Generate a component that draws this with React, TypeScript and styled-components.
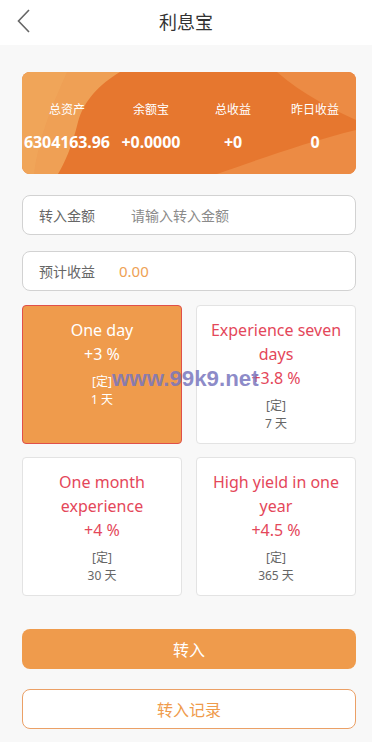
import React from "react";
import styled, { createGlobalStyle } from "styled-components";

const Global = createGlobalStyle`
  html, body { margin: 0; padding: 0; background: #f8f8f8; }
  body { font-family: "Noto Sans", "Noto Sans CJK SC", sans-serif; }
  * { box-sizing: border-box; }
`;

const Page = styled.div`
  position: relative;
  width: 372px;
  min-height: 742px;
  background: #f8f8f8;
`;

const Header = styled.header`
  position: relative;
  height: 45px;
  background: #fff;
  display: flex;
  align-items: center;
  justify-content: center;
`;

const Back = styled.button`
  position: absolute;
  left: 12px;
  top: 6px;
  width: 24px;
  height: 30px;
  border: 0;
  background: none;
  padding: 0;
  display: flex;
  align-items: center;
  justify-content: center;
`;

const Title = styled.h1`
  margin: 0;
  font-family: "Noto Sans CJK SC", sans-serif;
  font-weight: 400;
  font-size: 18px;
  color: #333;
  line-height: 1;
  margin-top: -4px;
`;

const Body = styled.main`
  padding: 27px 16px 0 22px;
  display: flex;
  flex-direction: column;
`;

const Banner = styled.section`
  position: relative;
  height: 102px;
  border-radius: 8px;
  overflow: hidden;
  background: #e6772f;
  display: grid;
  grid-template-columns: repeat(4, 1fr);
  align-content: start;
  padding-top: 29px;
  padding-left: 2px;
  row-gap: 15px;
  color: #fff;
`;

const BannerBg = styled.svg`
  position: absolute;
  inset: 0;
  width: 100%;
  height: 100%;
`;

const StatLabel = styled.div`
  position: relative;
  text-align: center;
  font-family: "Noto Sans CJK SC", sans-serif;
  font-size: 12px;
  line-height: 16px;
`;

const StatValue = styled.div`
  position: relative;
  text-align: center;
  font-weight: 700;
  font-size: 16px;
  line-height: 20px;
  white-space: nowrap;
  letter-spacing: -0.1px;
`;

const Field = styled.div<{ $top: number }>`
  margin-top: ${(p) => p.$top}px;
  height: 40px;
  border: 1px solid #d2d2d2;
  border-radius: 8px;
  background: #fff;
  display: flex;
  align-items: center;
  padding-left: 16px;
`;

const FieldLabel = styled.span<{ $w: number }>`
  width: ${(p) => p.$w}px;
  font-family: "Noto Sans CJK SC", sans-serif;
  font-size: 14px;
  color: #666;
`;

const FieldInput = styled.input`
  flex: 1;
  border: 0;
  outline: none;
  background: transparent;
  padding: 0;
  font-family: "Noto Sans CJK SC", sans-serif;
  font-size: 14px;
  color: #333;
  &::placeholder { color: #8a8a8a; }
`;

const Earn = styled.span`
  font-size: 15px;
  color: #eea154;
`;

const Grid = styled.div`
  margin-top: 14px;
  display: grid;
  grid-template-columns: 160px 160px;
  column-gap: 14px;
  row-gap: 13px;
`;

const Card = styled.div<{ $active?: boolean }>`
  height: 139px;
  border-radius: 4px;
  border: 1px solid ${(p) => (p.$active ? "#e0504a" : "#e3e3e3")};
  background: ${(p) => (p.$active ? "#ef9b4c" : "#fff")};
  padding: 12px 6px 0;
  display: flex;
  flex-direction: column;
  align-items: center;
  text-align: center;
`;

const CardName = styled.div<{ $active?: boolean }>`
  font-size: 16px;
  line-height: 24px;
  color: ${(p) => (p.$active ? "#fff" : "#e4475a")};
`;

const CardRate = styled(CardName)``;

const CardMeta = styled.div<{ $active?: boolean }>`
  margin-top: 7px;
  font-family: "Noto Sans", "Noto Sans CJK SC", sans-serif;
  font-size: 12px;
  line-height: 18px;
  color: ${(p) => (p.$active ? "#fff" : "#666")};
`;

const Primary = styled.button`
  margin-top: 33px;
  height: 40px;
  border: 0;
  border-radius: 8px;
  background: #ef9b4c;
  color: #fff;
  font-family: "Noto Sans CJK SC", sans-serif;
  font-size: 16px;
`;

const Secondary = styled.button`
  margin-top: 20px;
  height: 40px;
  border: 1px solid #eba066;
  border-radius: 8px;
  background: #fff;
  color: #ef9b4c;
  font-family: "Noto Sans CJK SC", sans-serif;
  font-size: 16px;
`;

const Watermark = styled.span`
  position: absolute;
  left: 112px;
  top: 368px;
  font-family: "Liberation Sans", sans-serif;
  font-weight: 700;
  font-size: 22.3px;
  line-height: 1;
  color: rgba(120, 118, 190, 0.85);
  pointer-events: none;
`;

const stats = [
  ["总资产", "6304163.96"],
  ["余额宝", "+0.0000"],
  ["总收益", "+0"],
  ["昨日收益", "0"],
];

const plans = [
  { name: "One day", rate: "+3 %", days: "1 天", active: true },
  { name: "Experience seven days", rate: "+3.8 %", days: "7 天" },
  { name: "One month experience", rate: "+4 %", days: "30 天" },
  { name: "High yield in one year", rate: "+4.5 %", days: "365 天" },
];

export default function App() {
  return (
    <Page>
      <Global />
      <Header>
        <Back aria-label="back">
          <svg width="14" height="24" viewBox="0 0 14 24">
            <path d="M12 1 L1.5 12 L12 23" fill="none" stroke="#666" strokeWidth="1.6" />
          </svg>
        </Back>
        <Title>利息宝</Title>
      </Header>
      <Body>
        <Banner>
          <BannerBg viewBox="0 0 334 102" preserveAspectRatio="none">
            <path d="M0 0 H98 C78 12 62 28 56 50 C50 75 42 92 36 102 H0 Z" fill="#efa055" />
            <path d="M0 0 H45 C32 30 18 60 12 102 H0 Z" fill="#f2a95e" opacity="0.5" />
            <path d="M255 0 H334 V48 C312 38 280 22 255 0 Z" fill="#ec8b44" />
            <path d="M195 102 C235 88 285 70 334 58 V102 Z" fill="#ec8b44" />
          </BannerBg>
          {stats.map(([l]) => (
            <StatLabel key={l}>{l}</StatLabel>
          ))}
          {stats.map(([l, v]) => (
            <StatValue key={l}>{v}</StatValue>
          ))}
        </Banner>
        <Field $top={21}>
          <FieldLabel $w={92}>转入金额</FieldLabel>
          <FieldInput placeholder="请输入转入金额" />
        </Field>
        <Field $top={16}>
          <FieldLabel $w={80}>预计收益</FieldLabel>
          <Earn>0.00</Earn>
        </Field>
        <Grid>
          {plans.map((p) => (
            <Card key={p.name} $active={p.active}>
              <CardName $active={p.active}>{p.name}</CardName>
              <CardRate $active={p.active}>{p.rate}</CardRate>
              <CardMeta $active={p.active}>
                [定]
                <br />
                {p.days}
              </CardMeta>
            </Card>
          ))}
        </Grid>
        <Primary>转入</Primary>
        <Secondary>转入记录</Secondary>
      </Body>
      <Watermark>www.99k9.net</Watermark>
    </Page>
  );
}
